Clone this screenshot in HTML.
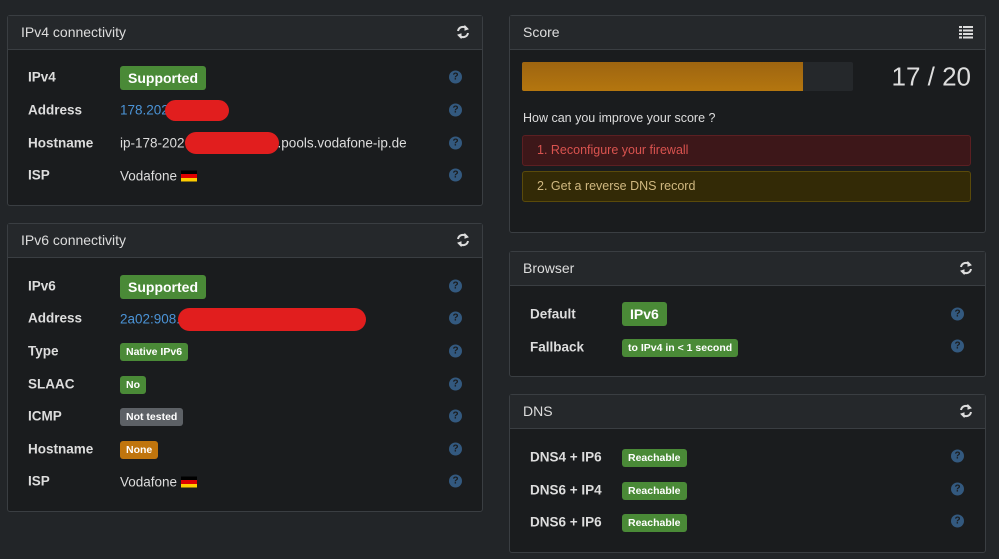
<!DOCTYPE html>
<html><head><meta charset="utf-8"><style>
*{box-sizing:border-box;margin:0;padding:0}
body{width:999px;height:559px;background:#222528;font-family:"Liberation Sans",sans-serif;color:#ddd;position:relative;overflow:hidden}
.p{position:absolute;background:#1a1c1e;border:1px solid #3a3e42;border-radius:3px}
.h{position:absolute;left:0;right:0;top:0;background:#25282b;border-bottom:1px solid #3a3e42;font-size:14px;color:#ddd;padding-left:13px}
.a{position:absolute;white-space:nowrap;transform:translateY(-50%)}
.l{font-weight:bold;font-size:13.5px;color:#ddd}
.v{font-size:13.5px;color:#ddd}
.b{font-weight:bold;color:#fff;background:#4a8a37;border-radius:3px;padding:0 6px}
.big{font-size:14px;height:24px;line-height:24px;padding:0 8px}
.sm{font-size:10.5px;height:18px;line-height:18px;padding:0 6px}
.q{position:absolute;width:13px;height:13px;border-radius:50%;background:#33597f;color:#1a1c1e;font-weight:bold;font-size:10px;line-height:13px;text-align:center;transform:translateY(-50%)}
.r{position:absolute;background:#e11e1e;border-radius:12px}
.ic{position:absolute;right:12px;top:9px}
</style></head><body>

<!-- IPv4 -->
<div class="p" style="left:7px;top:15px;width:476px;height:191px">
<div class="h" style="height:34px;line-height:33px">IPv4 connectivity
<svg class="ic" width="14" height="14" viewBox="0 0 14 14" fill="none" stroke="#ddd" stroke-width="2"><path d="M2 6A5 5 0 0 1 11 4"/><path d="M12 8A5 5 0 0 1 3 10"/><path d="M9 1l3 3-3 1z" fill="#ddd" stroke-width="1"/><path d="M5 13l-3-3 3-1z" fill="#ddd" stroke-width="1"/></svg></div>
</div>
<div class="a l" style="left:28px;top:77px">IPv4</div>
<div class="a b big" style="left:120px;top:78px">Supported</div>
<div class="a l" style="left:28px;top:110px">Address</div>
<div class="a v" style="left:120px;top:110px;color:#4b93d6">178.202</div>
<div class="r" style="left:165px;top:100px;width:64px;height:21px"></div>
<div class="a l" style="left:28px;top:143px">Hostname</div>
<div class="a v" style="left:120px;top:143px">ip-178-202<span style="display:inline-block;width:93px"></span>.pools.vodafone-ip.de</div>
<div class="r" style="left:185px;top:132px;width:94px;height:22px"></div>
<div class="a l" style="left:28px;top:175px">ISP</div>
<div class="a v" style="left:120px;top:176px">Vodafone <span style="display:inline-block;width:16px;height:11px;background:linear-gradient(#000 33%,#d00 33% 66%,#fc0 66%);vertical-align:-1px"></span></div>
<div class="q" style="left:449px;top:77px">?</div><div class="q" style="left:449px;top:110px">?</div><div class="q" style="left:449px;top:143px">?</div><div class="q" style="left:449px;top:175px">?</div>

<!-- IPv6 -->
<div class="p" style="left:7px;top:223px;width:476px;height:289px">
<div class="h" style="height:34px;line-height:33px">IPv6 connectivity
<svg class="ic" width="14" height="14" viewBox="0 0 14 14" fill="none" stroke="#ddd" stroke-width="2"><path d="M2 6A5 5 0 0 1 11 4"/><path d="M12 8A5 5 0 0 1 3 10"/><path d="M9 1l3 3-3 1z" fill="#ddd" stroke-width="1"/><path d="M5 13l-3-3 3-1z" fill="#ddd" stroke-width="1"/></svg></div>
</div>
<div class="a l" style="left:28px;top:286px">IPv6</div>
<div class="a b big" style="left:120px;top:287px">Supported</div>
<div class="a l" style="left:28px;top:318px">Address</div>
<div class="a v" style="left:120px;top:319px;color:#4b93d6">2a02:908.</div>
<div class="r" style="left:178px;top:308px;width:188px;height:23px"></div>
<div class="a l" style="left:28px;top:351px">Type</div>
<div class="a b sm" style="left:120px;top:352px">Native IPv6</div>
<div class="a l" style="left:28px;top:384px">SLAAC</div>
<div class="a b sm" style="left:120px;top:385px">No</div>
<div class="a l" style="left:28px;top:416px">ICMP</div>
<div class="a b sm" style="left:120px;top:417px;background:#5d6166">Not tested</div>
<div class="a l" style="left:28px;top:449px">Hostname</div>
<div class="a b sm" style="left:120px;top:450px;background:#c0750d">None</div>
<div class="a l" style="left:28px;top:481px">ISP</div>
<div class="a v" style="left:120px;top:482px">Vodafone <span style="display:inline-block;width:16px;height:11px;background:linear-gradient(#000 33%,#d00 33% 66%,#fc0 66%);vertical-align:-1px"></span></div>
<div class="q" style="left:449px;top:286px">?</div><div class="q" style="left:449px;top:318px">?</div><div class="q" style="left:449px;top:351px">?</div><div class="q" style="left:449px;top:384px">?</div><div class="q" style="left:449px;top:416px">?</div><div class="q" style="left:449px;top:449px">?</div><div class="q" style="left:449px;top:481px">?</div>

<!-- Score -->
<div class="p" style="left:509px;top:15px;width:477px;height:218px">
<div class="h" style="height:34px;line-height:33px">Score
<svg class="ic" width="14" height="13" viewBox="0 0 14 13" fill="#ddd" style="top:10px"><rect x="0" y="0" width="3" height="2"/><rect x="4" y="0" width="10" height="2"/><rect x="0" y="3.5" width="3" height="2"/><rect x="4" y="3.5" width="10" height="2"/><rect x="0" y="7" width="3" height="2"/><rect x="4" y="7" width="10" height="2"/><rect x="0" y="10.5" width="3" height="2"/><rect x="4" y="10.5" width="10" height="2"/></svg></div>
</div>
<div style="position:absolute;left:522px;top:62px;width:331px;height:29px;background:#25282b;border-radius:2px"><div style="width:281px;height:29px;background:linear-gradient(#9e6510,#b4760f);border-radius:2px 0 0 2px"></div></div>
<div class="a" style="right:28px;top:77px;font-size:26px;color:#ddd">17 / 20</div>
<div class="a" style="left:523px;top:118px;font-size:12.5px;color:#ddd">How can you improve your score ?</div>
<div style="position:absolute;left:522px;top:135px;width:449px;height:31px;background:#3d1719;border:1px solid #5c1f22;border-radius:3px;color:#d9534f;font-size:12.5px;line-height:29px;padding-left:14px">1. Reconfigure your firewall</div>
<div style="position:absolute;left:522px;top:171px;width:449px;height:31px;background:#332a06;border:1px solid #5a4a0a;border-radius:3px;color:#d0b880;font-size:12.5px;line-height:29px;padding-left:14px">2. Get a reverse DNS record</div>

<!-- Browser -->
<div class="p" style="left:509px;top:251px;width:477px;height:126px">
<div class="h" style="height:34px;line-height:33px">Browser
<svg class="ic" width="14" height="14" viewBox="0 0 14 14" fill="none" stroke="#ddd" stroke-width="2"><path d="M2 6A5 5 0 0 1 11 4"/><path d="M12 8A5 5 0 0 1 3 10"/><path d="M9 1l3 3-3 1z" fill="#ddd" stroke-width="1"/><path d="M5 13l-3-3 3-1z" fill="#ddd" stroke-width="1"/></svg></div>
</div>
<div class="a l" style="left:530px;top:314px">Default</div>
<div class="a b big" style="left:622px;top:314px">IPv6</div>
<div class="a l" style="left:530px;top:347px">Fallback</div>
<div class="a b sm" style="left:622px;top:348px">to IPv4 in &lt; 1 second</div>
<div class="q" style="left:951px;top:314px">?</div><div class="q" style="left:951px;top:346px">?</div>

<!-- DNS -->
<div class="p" style="left:509px;top:394px;width:477px;height:159px">
<div class="h" style="height:34px;line-height:33px">DNS
<svg class="ic" width="14" height="14" viewBox="0 0 14 14" fill="none" stroke="#ddd" stroke-width="2"><path d="M2 6A5 5 0 0 1 11 4"/><path d="M12 8A5 5 0 0 1 3 10"/><path d="M9 1l3 3-3 1z" fill="#ddd" stroke-width="1"/><path d="M5 13l-3-3 3-1z" fill="#ddd" stroke-width="1"/></svg></div>
</div>
<div class="a l" style="left:530px;top:457px">DNS4 + IP6</div>
<div class="a b sm" style="left:622px;top:458px">Reachable</div>
<div class="a l" style="left:530px;top:490px">DNS6 + IP4</div>
<div class="a b sm" style="left:622px;top:491px">Reachable</div>
<div class="a l" style="left:530px;top:522px">DNS6 + IP6</div>
<div class="a b sm" style="left:622px;top:523px">Reachable</div>
<div class="q" style="left:951px;top:456px">?</div><div class="q" style="left:951px;top:489px">?</div><div class="q" style="left:951px;top:521px">?</div>
</body></html>
